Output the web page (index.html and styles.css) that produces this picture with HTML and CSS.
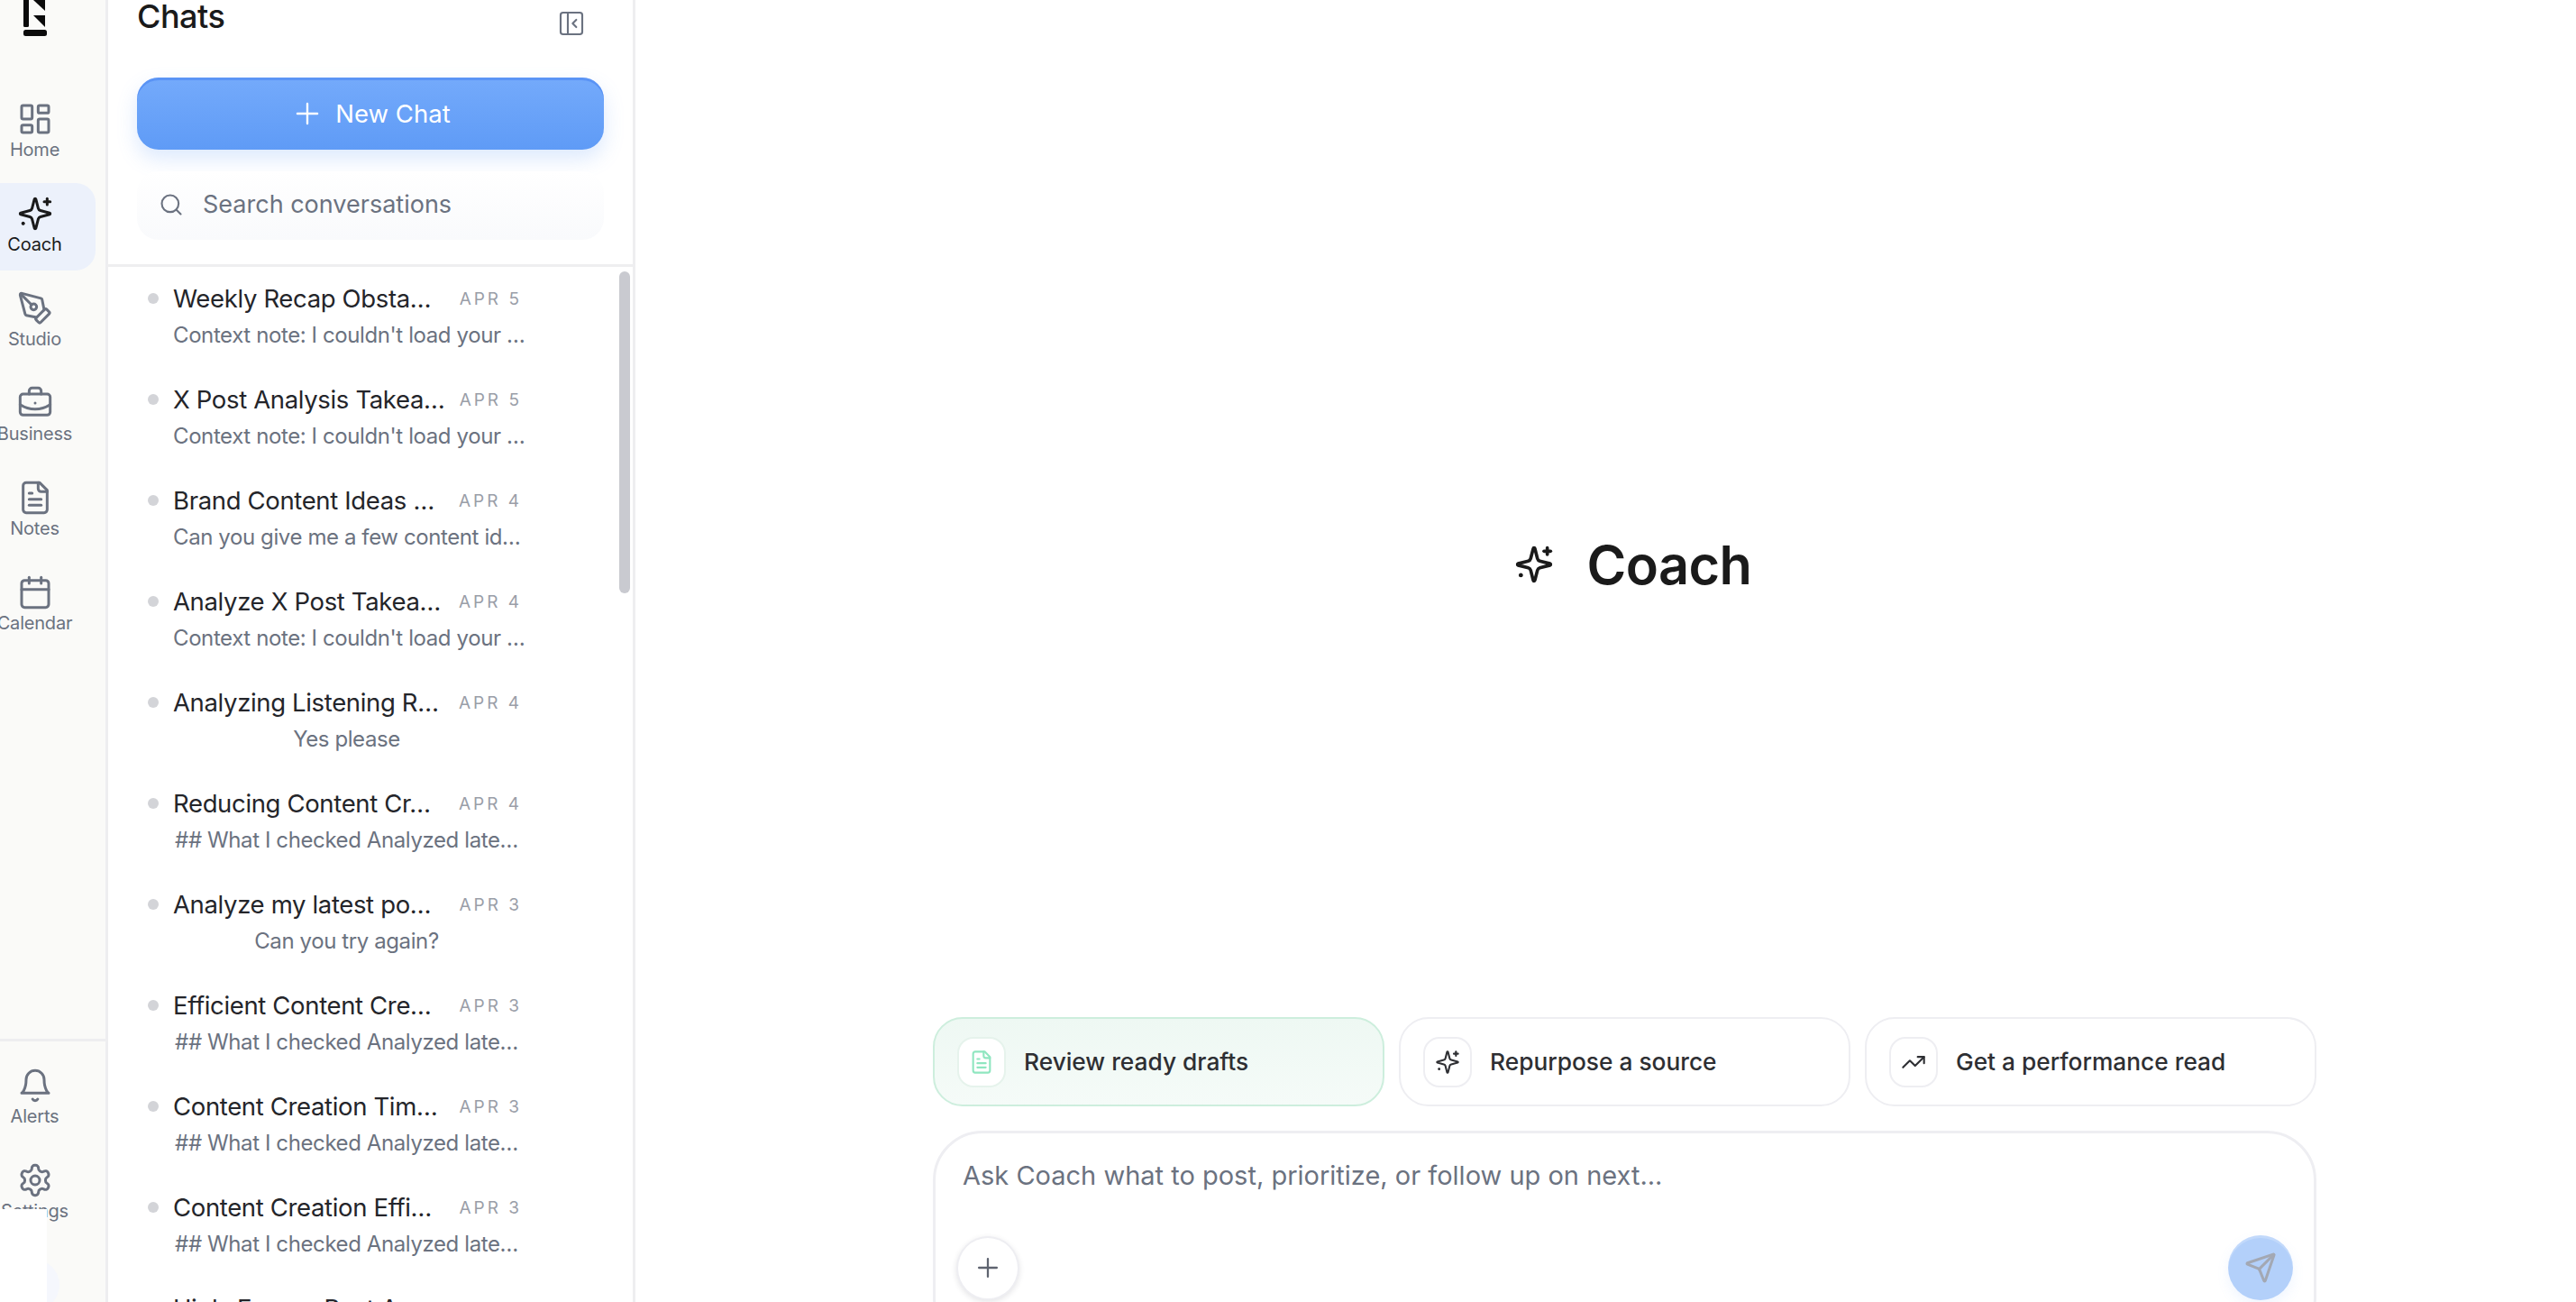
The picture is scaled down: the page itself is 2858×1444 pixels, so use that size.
FILE: index.html
```html
<!DOCTYPE html>
<html lang="en">
<head>
<meta charset="utf-8">
<title>Coach</title>
<link rel="stylesheet" href="styles.css">
</head>
<body>
<svg class="defs" width="0" height="0" aria-hidden="true">
  <defs>
    <symbol id="i-home" viewBox="0 0 24 24"><rect x="3" y="3" width="7" height="9" rx="1"/><rect x="14" y="3" width="7" height="5" rx="1"/><rect x="14" y="12" width="7" height="9" rx="1"/><rect x="3" y="16" width="7" height="5" rx="1"/></symbol>
    <symbol id="i-spark" viewBox="0 0 24 24"><path d="M9.937 15.5A2 2 0 0 0 8.5 14.063l-6.135-1.582a.5.5 0 0 1 0-.962L8.5 9.936A2 2 0 0 0 9.937 8.5l1.582-6.135a.5.5 0 0 1 .963 0L14.063 8.5A2 2 0 0 0 15.5 9.937l6.135 1.581a.5.5 0 0 1 0 .964L15.5 14.063a2 2 0 0 0-1.437 1.437l-1.582 6.135a.5.5 0 0 1-.963 0z"/><path d="M20 2v4"/><path d="M22 4h-4"/><path d="M4 18.2v.6"/><path d="M3.7 18.5h.6"/></symbol>
    <symbol id="i-pen" viewBox="0 0 24 24"><path d="M15.707 21.293a1 1 0 0 1-1.414 0l-1.586-1.586a1 1 0 0 1 0-1.414l5.586-5.586a1 1 0 0 1 1.414 0l1.586 1.586a1 1 0 0 1 0 1.414z"/><path d="m18 13-1.375-6.874a1 1 0 0 0-.746-.776L3.235 2.028a1 1 0 0 0-1.207 1.207L5.35 15.879a1 1 0 0 0 .776.746L13 18"/><path d="m2.3 2.3 7.286 7.286"/><circle cx="11" cy="11" r="2"/></symbol>
    <symbol id="i-case" viewBox="0 0 24 24"><path d="M12 12h.01"/><path d="M16 6V4a2 2 0 0 0-2-2h-4a2 2 0 0 0-2 2v2"/><path d="M22 13a18.15 18.15 0 0 1-20 0"/><rect x="2" y="6" width="20" height="14" rx="2"/></symbol>
    <symbol id="i-file" viewBox="0 0 24 24"><path d="M15 2H6a2 2 0 0 0-2 2v16a2 2 0 0 0 2 2h12a2 2 0 0 0 2-2V7Z"/><path d="M14 2v4a2 2 0 0 0 2 2h4"/><path d="M10 9H8"/><path d="M16 13H8"/><path d="M16 17H8"/></symbol>
    <symbol id="i-cal" viewBox="0 0 24 24"><path d="M8 2v4"/><path d="M16 2v4"/><rect x="3" y="4" width="18" height="18" rx="2"/><path d="M3 10h18"/></symbol>
    <symbol id="i-bell" viewBox="0 0 24 24"><path d="M6 8a6 6 0 0 1 12 0c0 7 3 9 3 9H3s3-2 3-9"/><path d="M10.3 21a1.94 1.94 0 0 0 3.4 0"/></symbol>
    <symbol id="i-gear" viewBox="0 0 24 24"><path d="M12.22 2h-.44a2 2 0 0 0-2 2v.18a2 2 0 0 1-1 1.73l-.43.25a2 2 0 0 1-2 0l-.15-.08a2 2 0 0 0-2.73.73l-.22.38a2 2 0 0 0 .73 2.73l.15.1a2 2 0 0 1 1 1.72v.51a2 2 0 0 1-1 1.74l-.15.09a2 2 0 0 0-.73 2.73l.22.38a2 2 0 0 0 2.73.73l.15-.08a2 2 0 0 1 2 0l.43.25a2 2 0 0 1 1 1.73V20a2 2 0 0 0 2 2h.44a2 2 0 0 0 2-2v-.18a2 2 0 0 1 1-1.73l.43-.25a2 2 0 0 1 2 0l.15.08a2 2 0 0 0 2.73-.73l.22-.39a2 2 0 0 0-.73-2.73l-.15-.08a2 2 0 0 1-1-1.74v-.5a2 2 0 0 1 1-1.74l.15-.09a2 2 0 0 0 .73-2.73l-.22-.38a2 2 0 0 0-2.73-.73l-.15.08a2 2 0 0 1-2 0l-.43-.25a2 2 0 0 1-1-1.73V4a2 2 0 0 0-2-2z"/><circle cx="12" cy="12" r="3"/></symbol>
    <symbol id="i-panel" viewBox="0 0 24 24"><rect x="3" y="3" width="18" height="18" rx="2"/><path d="M9 3v18"/><path d="m16 15-3-3 3-3"/></symbol>
    <symbol id="i-plus" viewBox="0 0 24 24"><path d="M5 12h14"/><path d="M12 5v14"/></symbol>
    <symbol id="i-search" viewBox="0 0 24 24"><circle cx="11" cy="11" r="8"/><path d="m21 21-4.3-4.3"/></symbol>
    <symbol id="i-trend" viewBox="0 0 24 24"><path d="M16 7h6v6"/><path d="m22 7-8.5 8.5-5-5L2 17"/></symbol>
    <symbol id="i-send" viewBox="0 0 24 24"><path d="M14.536 21.686a.5.5 0 0 0 .937-.024l6.5-19a.496.496 0 0 0-.635-.635l-19 6.5a.5.5 0 0 0-.024.937l7.93 3.18a2 2 0 0 1 1.112 1.11z"/><path d="m21.854 2.147-10.94 10.939"/></symbol>
  </defs>
</svg>

<div class="app">
  <nav class="rail">
    <div class="rail-logo">
      <svg class="logo" viewBox="0 0 28 40" width="28" height="40" aria-label="Logo">
        <rect x="1" y="-3" width="6" height="33" rx="1.5" fill="#0b0b0b"/>
        <path d="M12 0h13v12z" fill="#0b0b0b"/>
        <path d="M12 17h13v13z" fill="#0b0b0b"/>
        <rect x="1" y="33" width="26" height="7" rx="2.5" fill="#0b0b0b"/>
      </svg>
    </div>
    <a class="rail-item"><svg class="ico"><use href="#i-home"/></svg><span>Home</span></a>
    <a class="rail-item is-active"><svg class="ico"><use href="#i-spark"/></svg><span>Coach</span></a>
    <a class="rail-item"><svg class="ico"><use href="#i-pen"/></svg><span>Studio</span></a>
    <a class="rail-item"><svg class="ico"><use href="#i-case"/></svg><span>Business</span></a>
    <a class="rail-item"><svg class="ico"><use href="#i-file"/></svg><span>Notes</span></a>
    <a class="rail-item"><svg class="ico"><use href="#i-cal"/></svg><span>Calendar</span></a>
    <div class="rail-bottom">
      <a class="rail-item"><svg class="ico"><use href="#i-bell"/></svg><span>Alerts</span></a>
      <a class="rail-item"><svg class="ico"><use href="#i-gear"/></svg><span>Settings</span></a>
    </div>
    <div class="rail-blob"></div>
    <div class="rail-cover"></div>
  </nav>

  <aside class="chats">
    <header class="chats-head">
      <div class="chats-title-row">
        <h2 class="chats-title">Chats</h2>
        <svg class="panel-ico"><use href="#i-panel"/></svg>
      </div>
      <button class="new-chat"><svg class="new-ico"><use href="#i-plus"/></svg>New Chat</button>
      <div class="search"><svg class="search-ico"><use href="#i-search"/></svg><span>Search conversations</span></div>
    </header>
    <div class="chat-list">
      <div class="scroll-thumb"></div>
      <article class="chat"><div class="chat-top"><i class="dot"></i><span class="chat-title">Weekly Recap Obsta…</span><time class="chat-date">APR 5</time></div><p class="chat-sub">Context note: I couldn't load your …</p></article>
      <article class="chat"><div class="chat-top"><i class="dot"></i><span class="chat-title">X Post Analysis Takea…</span><time class="chat-date">APR 5</time></div><p class="chat-sub">Context note: I couldn't load your …</p></article>
      <article class="chat"><div class="chat-top"><i class="dot"></i><span class="chat-title">Brand Content Ideas …</span><time class="chat-date">APR 4</time></div><p class="chat-sub">Can you give me a few content id…</p></article>
      <article class="chat"><div class="chat-top"><i class="dot"></i><span class="chat-title">Analyze X Post Takea…</span><time class="chat-date">APR 4</time></div><p class="chat-sub">Context note: I couldn't load your …</p></article>
      <article class="chat"><div class="chat-top"><i class="dot"></i><span class="chat-title">Analyzing Listening R…</span><time class="chat-date">APR 4</time></div><p class="chat-sub">Yes please</p></article>
      <article class="chat"><div class="chat-top"><i class="dot"></i><span class="chat-title">Reducing Content Cr…</span><time class="chat-date">APR 4</time></div><p class="chat-sub">## What I checked Analyzed late…</p></article>
      <article class="chat"><div class="chat-top"><i class="dot"></i><span class="chat-title">Analyze my latest po…</span><time class="chat-date">APR 3</time></div><p class="chat-sub">Can you try again?</p></article>
      <article class="chat"><div class="chat-top"><i class="dot"></i><span class="chat-title">Efficient Content Cre…</span><time class="chat-date">APR 3</time></div><p class="chat-sub">## What I checked Analyzed late…</p></article>
      <article class="chat"><div class="chat-top"><i class="dot"></i><span class="chat-title">Content Creation Tim…</span><time class="chat-date">APR 3</time></div><p class="chat-sub">## What I checked Analyzed late…</p></article>
      <article class="chat"><div class="chat-top"><i class="dot"></i><span class="chat-title">Content Creation Effi…</span><time class="chat-date">APR 3</time></div><p class="chat-sub">## What I checked Analyzed late…</p></article>
      <article class="chat"><div class="chat-top"><i class="dot"></i><span class="chat-title">High-Energy Post A…</span></div></article>
    </div>
  </aside>

  <main class="main">
    <section class="hero">
      <svg class="hero-ico"><use href="#i-spark"/></svg>
      <h1 class="hero-title">Coach</h1>
    </section>
    <section class="pills">
      <button class="pill pill-green"><span class="pill-box"><svg class="pill-ico"><use href="#i-file"/></svg></span>Review ready drafts</button>
      <button class="pill"><span class="pill-box"><svg class="pill-ico"><use href="#i-spark"/></svg></span>Repurpose a source</button>
      <button class="pill"><span class="pill-box"><svg class="pill-ico"><use href="#i-trend"/></svg></span>Get a performance read</button>
    </section>
    <section class="composer">
      <p class="placeholder">Ask Coach what to post, prioritize, or follow up on next...</p>
      <div class="composer-actions">
        <button class="add"><svg class="add-ico"><use href="#i-plus"/></svg></button>
        <button class="send"><svg class="send-ico"><use href="#i-send"/></svg></button>
      </div>
    </section>
  </main>
</div>
</body>
</html>
```
FILE: styles.css
```css
* { box-sizing: border-box; }
html, body { margin: 0; height: 100%; overflow: hidden; background: #fff; }
body { font-family: "Inter", "Liberation Sans", sans-serif; color: #1f2024; }
.defs { position: absolute; }
svg { fill: none; stroke: currentColor; stroke-linecap: round; stroke-linejoin: round; }
button { font-family: inherit; border: 0; padding: 0; background: none; }

.app { display: flex; height: 1444px; overflow: hidden; }

/* rail */
.rail { position: relative; width: 120px; flex: none; display: flex; flex-direction: column; gap: 8px; height: 100%; background: #fafaf8; border-right: 3px solid #eeeef0; overflow: hidden; }
.rail-logo { height: 90px; padding-left: 25px; flex: none; }
.logo { display: block; stroke: none; }
.rail-item { width: 135px; height: 97px; margin-left: -29px; padding-top: 14px; flex: none; display: flex; flex-direction: column; align-items: center; gap: 1px; color: #6b7280; border-radius: 0 22px 22px 0; font-size: 20px; line-height: 26px; letter-spacing: -0.2px; }
.rail-item.is-active { background: #ecf1fb; color: #1a1a1a; }
.ico { width: 40px; height: 40px; stroke-width: 1.8; flex: none; }
.rail-bottom { margin-top: auto; padding: 15px 0 72px; border-top: 3px solid #eeeef0; display: flex; flex-direction: column; gap: 8px; }
.rail-blob { position: absolute; left: 10px; top: 1397px; width: 56px; height: 56px; border-radius: 50%; background: #f5f7fd; }
.rail-cover { position: absolute; left: 0; top: 1341px; bottom: 0; width: 52px; background: #fff; }

/* chats */
.chats { width: 585px; flex: none; display: flex; flex-direction: column; height: 100%; border-right: 3px solid #eeeef0; }
.chats-head { height: 296px; flex: none; padding: 0 32px; border-bottom: 3px solid #eeeef0; }
.chats-title-row { height: 86px; display: flex; justify-content: space-between; }
.chats-title { margin: 0; font-size: 36px; line-height: 36px; font-weight: 500; color: #1a1a1a; letter-spacing: -0.5px; }
.panel-ico { width: 32px; height: 32px; margin: 10px 20px 0 0; stroke-width: 1.6; color: #6b7280; }
.new-chat { width: 100%; height: 80px; display: flex; align-items: center; justify-content: center; gap: 12px; color: #fff; font-size: 27.5px; font-weight: 400; border-radius: 24px; background: linear-gradient(180deg, #74aafb, #5f9bf6); box-shadow: inset 0 3px 0 rgba(70,130,240,.55), 0 10px 22px rgba(95,155,246,.22); }
.new-ico { width: 38px; height: 38px; stroke-width: 1.5; }
.search { height: 76px; margin-top: 24px; padding: 0 0 3px 24px; display: flex; align-items: center; gap: 21px; border-radius: 24px; background: linear-gradient(180deg, #fff, #f9fafc); color: #6b7280; font-size: 27px; }
.search-ico { width: 28px; height: 28px; stroke-width: 1.8; }

.chat-list { position: relative; flex: 1; overflow: hidden; padding-left: 44px; }
.scroll-thumb { position: absolute; top: 5px; right: 3px; width: 12px; height: 357px; border-radius: 6px; background: #c9cad0; }
.chat { height: 112px; width: 415px; padding-top: 15px; }
.chat-top { display: flex; align-items: center; height: 40px; }
.dot { width: 12px; height: 12px; border-radius: 50%; background: #d3d4d8; margin-right: 16px; flex: none; }
.chat-title { flex: 1; font-size: 27.5px; line-height: 40px; white-space: nowrap; color: #24252a; letter-spacing: -0.35px; }
.chat-date { font-size: 19px; color: #9a9ea8; letter-spacing: 3px; white-space: nowrap; }
.chat-sub { margin: 3px 2px 0 28px; font-size: 24px; line-height: 36px; color: #6b7280; text-align: center; white-space: nowrap; letter-spacing: -0.4px; }

/* main */
.main { flex: 1; min-width: 0; padding-left: 330px; display: flex; flex-direction: column; }
.hero { width: 1535px; height: 1128px; flex: none; padding: 124px 0 0 18px; display: flex; align-items: center; justify-content: center; gap: 37px; }
.hero-ico { width: 44px; height: 44px; stroke-width: 2; color: #1a1a1a; }
.hero-title { margin: 0; font-size: 59.5px; font-weight: 600; color: #1a1a1a; letter-spacing: -0.6px; }
.pills { width: 1535px; display: grid; grid-template-columns: repeat(3, 1fr); gap: 16px; flex: none; }
.pill { height: 99px; padding-left: 25px; display: flex; align-items: center; gap: 20px; font-size: 26.3px; font-weight: 500; color: #2e2f33; border: 2px solid #eeeef2; border-radius: 33px; background: #fff; }
.pill-green { background: linear-gradient(180deg, #eef8f3, #f5fbf8); border-color: #cdeedd; }
.pill-box { width: 54px; height: 56px; display: flex; align-items: center; justify-content: center; background: #fff; border: 2px solid #eeeef2; border-radius: 18px; flex: none; }
.pill-green .pill-box { border-color: #e6f3ec; color: #8fe6c0; }
.pill-ico { width: 28px; height: 28px; stroke-width: 1.8; }
.composer { width: 1535px; height: 240px; flex: none; margin-top: 27px; padding: 29px 23px 0 23px; border: 3px solid #eeeef2; border-radius: 55px; }
.placeholder { margin: 0 0 0 7px; font-size: 29px; line-height: 36px; color: #6b7280; }
.composer-actions { margin-top: 48px; display: flex; justify-content: space-between; align-items: center; }
.add { width: 70px; height: 71px; border-radius: 50%; background: #fff; border: 2px solid #eeeef2; box-shadow: 0 2px 6px rgba(30,30,50,.12); display: flex; align-items: center; justify-content: center; color: #5f6470; }
.add-ico { width: 34px; height: 34px; stroke-width: 1.6; }
.send { width: 72px; height: 72px; border-radius: 50%; background: #b3d0fa; box-shadow: inset 0 3px 0 rgba(255,255,255,.2), 0 6px 14px rgba(95,155,246,.1); display: flex; align-items: center; justify-content: center; color: #a3a8b3; }
.send-ico { width: 36px; height: 36px; stroke-width: 2; }
```
